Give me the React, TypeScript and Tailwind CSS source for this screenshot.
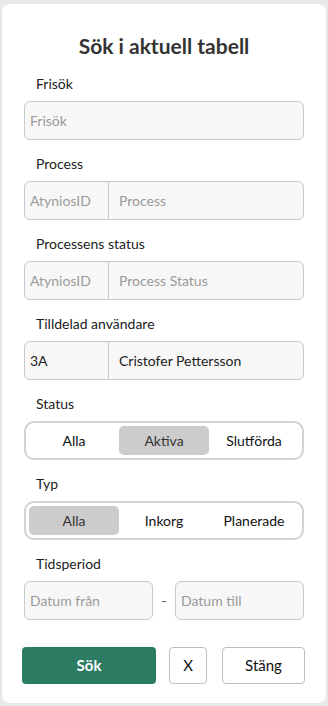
import { useState } from 'react'

const font = { fontFamily: 'Lato, "Noto Sans", sans-serif' }

function Label({ children }: { children: string }) {
  return <div className="ml-3 h-5 text-[14px] leading-5 text-[#222]">{children}</div>
}

function Segmented({ items, active }: { items: string[]; active: number }) {
  const [sel, setSel] = useState(active)
  return (
    <div className="mt-[7px] grid h-[39px] grid-cols-3 rounded-[10px] border-2 border-[#d2d2d2] p-[3px]">
      {items.map((it, i) => (
        <button
          key={it}
          onClick={() => setSel(i)}
          className={`rounded-[5px] text-[14px] ${
            sel === i ? 'bg-[#cccccc] text-[#333]' : 'text-[#111]'
          }`}
        >
          {it}
        </button>
      ))}
    </div>
  )
}

function SplitInput({ left, right, filled }: { left: string; right: string; filled?: boolean }) {
  return (
    <div className="mt-[7px] flex h-[39px] rounded-[6px] border border-[#c9c9c9] bg-[#f7f7f7] text-[14px]">
      <div
        className={`flex w-[84px] items-center border-r border-[#c9c9c9] pl-[5px] ${
          filled ? 'text-[#222]' : 'text-[#9a9a9a]'
        }`}
      >
        {left}
      </div>
      <div className={`flex flex-1 items-center pl-[10px] ${filled ? 'text-[#222]' : 'text-[#9a9a9a]'}`}>
        {right}
      </div>
    </div>
  )
}

function Input({ placeholder, className = '' }: { placeholder: string; className?: string }) {
  return (
    <input
      placeholder={placeholder}
      className={`h-[39px] rounded-[6px] border border-[#c9c9c9] bg-[#f7f7f7] pl-[5px] text-[14px] text-[#222] outline-none placeholder:text-[#9a9a9a] ${className}`}
    />
  )
}

export default function App() {
  return (
    <div className="min-h-[706px] bg-[#e8e8e8] px-[2px] pt-[4px] pb-[4px]" style={font}>
      <div className="flex flex-col rounded-[8px] bg-white px-[22px] pt-[28px] pb-[19px]">
        <h1 className="h-7 text-center text-[21px] font-bold leading-7 text-[#333]">
          Sök i aktuell tabell
        </h1>

        <div className="mt-[14px]">
          <Label>Frisök</Label>
          <Input placeholder="Frisök" className="mt-[7px] w-full" />
        </div>

        <div className="mt-[14px]">
          <Label>Process</Label>
          <SplitInput left="AtyniosID" right="Process" />
        </div>

        <div className="mt-[14px]">
          <Label>Processens status</Label>
          <SplitInput left="AtyniosID" right="Process Status" />
        </div>

        <div className="mt-[14px]">
          <Label>Tilldelad användare</Label>
          <SplitInput left="3A" right="Cristofer Pettersson" filled />
        </div>

        <div className="mt-[14px]">
          <Label>Status</Label>
          <Segmented items={['Alla', 'Aktiva', 'Slutförda']} active={1} />
        </div>

        <div className="mt-[14px]">
          <Label>Typ</Label>
          <Segmented items={['Alla', 'Inkorg', 'Planerade']} active={0} />
        </div>

        <div className="mt-[14px]">
          <Label>Tidsperiod</Label>
          <div className="mt-[7px] flex items-center">
            <Input placeholder="Datum från" className="w-[129px] min-w-0" />
            <span className="flex-1 text-center text-[14px] text-[#555]">-</span>
            <Input placeholder="Datum till" className="w-[129px] min-w-0" />
          </div>
        </div>

        <div className="-mx-[2px] mt-[27px] flex items-center">
          <button className="h-[37px] w-[134px] rounded-[4px] bg-[#2b7c62] text-[15px] font-bold text-white">
            Sök
          </button>
          <button className="ml-[13px] h-[37px] w-[38px] rounded-[4px] border border-[#bdbdbd] bg-white text-[15px] text-[#111]">
            X
          </button>
          <button className="ml-[15px] h-[37px] w-[83px] rounded-[4px] border border-[#bdbdbd] bg-white text-[15px] text-[#111]">
            Stäng
          </button>
        </div>
      </div>
    </div>
  )
}
